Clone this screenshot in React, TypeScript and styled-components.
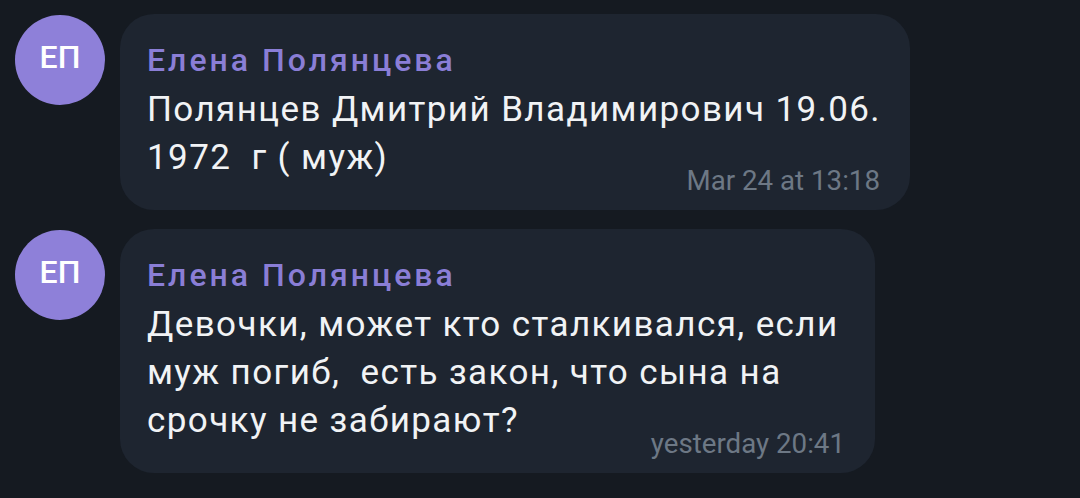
import React from "react";
import styled, { createGlobalStyle } from "styled-components";

const Global = createGlobalStyle`
  html, body {
    margin: 0;
    padding: 0;
    background: #151a21;
    width: 1080px;
    height: 498px;
    overflow: hidden;
  }
  body {
    font-family: Roboto, "Noto Sans", "Liberation Sans", sans-serif;
  }
`;

const Feed = styled.div`
  display: flex;
  flex-direction: column;
  gap: 19px;
  padding: 14px 0 0 15px;
`;

const Row = styled.div`
  display: flex;
  align-items: flex-start;
  gap: 15px;
`;

const Avatar = styled.div`
  flex: none;
  width: 90px;
  height: 90px;
  margin-top: 1px;
  border-radius: 50%;
  background: #8e80d9;
  color: #ffffff;
  display: flex;
  align-items: center;
  justify-content: center;
  font-size: 32px;
  font-weight: 500;
  padding-bottom: 6px;
  box-sizing: border-box;
`;

const Bubble = styled.div<{ $width: number }>`
  width: ${(p) => p.$width}px;
  box-sizing: border-box;
  background: #1e2530;
  border-radius: 34px;
  padding: 29px 0 14px 27px;
  display: flex;
  flex-direction: column;
`;

const Name = styled.div`
  color: #8a7ed6;
  font-size: 32px;
  font-weight: 500;
  line-height: 34px;
  letter-spacing: 3px;
`;

const Text = styled.div`
  margin-top: 9px;
  color: #f1f3f5;
  font-size: 35px;
  line-height: 48px;
  letter-spacing: 1.4px;
`;

const Line = styled.div`
  white-space: pre;
`;

const Time = styled.div`
  align-self: flex-end;
  margin-top: -16px;
  padding-right: 30px;
  color: #6d7885;
  font-size: 27.7px;
  line-height: 30px;
`;

type Msg = { width: number; lines: string[]; time: string };

const messages: Msg[] = [
  {
    width: 790,
    lines: ["Полянцев Дмитрий Владимирович 19.06.", "1972  г ( муж)"],
    time: "Mar 24 at 13:18",
  },
  {
    width: 755,
    lines: [
      "Девочки, может кто сталкивался, если",
      "муж погиб,  есть закон, что сына на",
      "срочку не забирают?",
    ],
    time: "yesterday 20:41",
  },
];

export default function App() {
  return (
    <>
      <Global />
      <Feed>
        {messages.map((m, i) => (
          <Row key={i}>
            <Avatar>ЕП</Avatar>
            <Bubble $width={m.width}>
              <Name>Елена Полянцева</Name>
              <Text>
                {m.lines.map((l, j) => (
                  <Line key={j}>{l}</Line>
                ))}
              </Text>
              <Time>{m.time}</Time>
            </Bubble>
          </Row>
        ))}
      </Feed>
    </>
  );
}
